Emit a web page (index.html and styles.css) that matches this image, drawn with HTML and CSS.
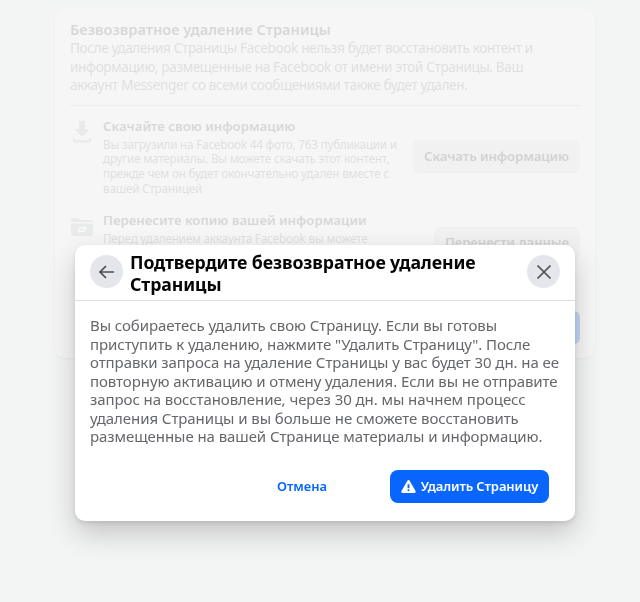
FILE: index.html
```html
<!DOCTYPE html>
<html lang="ru">
<head>
<meta charset="utf-8">
<title>Удаление Страницы</title>
<link rel="stylesheet" href="styles.css">
</head>
<body>
<main class="page">
  <section class="card">
    <h1 class="card-title">Безвозвратное удаление Страницы</h1>
    <p class="card-lead">После удаления Страницы Facebook нельзя будет восстановить контент и информацию, размещенные на Facebook от имени этой Страницы. Ваш аккаунт Messenger со всеми сообщениями также будет удален.</p>
    <hr class="rule">
    <div class="option">
      <svg class="option-icon" viewBox="0 0 20 24" aria-hidden="true"><path d="M7 1h6v8h4.500L10 17 2.500 9H7z"/><path d="M1 18h2v2h14v-2h2v2.500a2 2 0 0 1-2 2H3a2 2 0 0 1-2-2z"/></svg>
      <div class="option-text">
        <h2 class="option-title">Скачайте свою информацию</h2>
        <p class="option-desc">Вы загрузили на Facebook 44 фото, 763 публикации и другие материалы. Вы можете скачать этот контент, прежде чем он будет окончательно удален вместе с вашей Страницей</p>
      </div>
      <button class="ghost-btn">Скачать информацию</button>
    </div>
    <div class="option option-second">
      <svg class="option-icon folder" viewBox="0 0 22 20" aria-hidden="true"><path d="M0 3a2 2 0 0 1 2-2h5l2 2h11a2 2 0 0 1 2 2H0z"/><path fill-rule="evenodd" d="M0 6.500h22V17a2 2 0 0 1-2 2H2a2 2 0 0 1-2-2zM13 8.500v1.500H8v2h5v1.500l3.500-2.500zM9 11.500 5.500 14 9 16.500V15h5v-2H9z"/></svg>
      <div class="option-text">
        <h2 class="option-title">Перенесите копию вашей информации</h2>
        <p class="option-desc">Перед удалением аккаунта Facebook вы можете перенести копию своей информации в другой сервис</p>
      </div>
      <button class="ghost-btn ghost-btn-short">Перенести данные</button>
    </div>
    <div class="card-foot"><span class="foot-btn"></span></div>
  </section>
</main>
<div class="overlay">
  <div class="modal" role="dialog">
    <header class="modal-head">
      <button class="round-btn" aria-label="Назад">
        <svg viewBox="0 0 20 20" class="round-icon" aria-hidden="true"><path d="M17 10H3.500M9 4 3 10l6 6"/></svg>
      </button>
      <h2 class="modal-title">Подтвердите безвозвратное удаление Страницы</h2>
      <button class="round-btn" aria-label="Закрыть">
        <svg viewBox="0 0 20 20" class="round-icon" aria-hidden="true"><path d="M3.500 3.500l13 13M16.500 3.500l-13 13"/></svg>
      </button>
    </header>
    <p class="modal-text">Вы собираетесь удалить свою Страницу. Если вы готовы приступить к удалению, нажмите "Удалить Страницу". После отправки запроса на удаление Страницы у вас будет 30 дн. на ее повторную активацию и отмену удаления. Если вы не отправите запрос на восстановление, через 30 дн. мы начнем процесс удаления Страницы и вы больше не сможете восстановить размещенные на вашей Странице материалы и информацию.</p>
    <footer class="modal-foot">
      <button class="link-btn">Отмена</button>
      <button class="primary-btn">
        <svg viewBox="0 0 16 16" class="warn-icon" aria-hidden="true"><path fill-rule="evenodd" d="M8 1c.5 0 .9.300 1.200.800l6.300 11c.5.900 0 2-1.100 2H1.600c-1.100 0-1.600-1.100-1.100-2l6.300-11C7.100 1.300 7.500 1 8 1zM7 5.500v4.300h2V5.500zM8 10.800a1.100 1.100 0 1 0 0 2.200 1.100 1.100 0 0 0 0-2.200z"/></svg>
        Удалить Страницу
      </button>
    </footer>
  </div>
</div>
</body>
</html>
```
FILE: styles.css
```css
* { box-sizing: border-box; }
html, body { margin: 0; height: 100%; }
body {
  background: #f0f2f5;
  font-family: "Noto Sans", "Open Sans", "Liberation Sans", sans-serif;
  color: #050505;
  overflow: hidden;
}
h1, h2, p { margin: 0; }
button { font-family: inherit; border: 0; cursor: pointer; }

.page { padding: 8px 45px 0 55px; }
.card {
  width: 540px;
  height: 350px;
  padding: 11px 15px 0;
  background: #fff;
  border-radius: 10px;
  box-shadow: 0 1px 2px rgba(0, 0, 0, .2);
  overflow: hidden;
}
.card-title { font-size: 14.600px; line-height: 20px; font-weight: 600; color: #65676b; }
.card-lead { font-size: 13.500px; line-height: 18.500px; color: #8a8d91; width: 490px; letter-spacing: -.33px; }
.rule { border: 0; border-top: 1px solid #ced0d4; margin: 10px 0 0; }
.option { display: flex; align-items: flex-start; margin-top: 11px; }
.option-second { margin-top: 16px; }
.option-icon { width: 20px; height: 24px; flex: none; margin: 3px 11px 0 2px; fill: #bcc0c4; }
.option-icon.folder { width: 22px; height: 20px; margin: 6px 10px 0 1px; }
.option-text { width: 302px; flex: none; }
.option-title { font-size: 13.200px; line-height: 18px; font-weight: 600; color: #65676b; }
.option-desc { font-size: 11.700px; line-height: 14.700px; color: #8a8d91; margin-top: 2px; letter-spacing: -.2px; }
.ghost-btn {
  margin: 23px 0 0 auto;
  width: 167px;
  height: 33px;
  flex: none;
  background: #e4e6eb;
  border-radius: 6px;
  font-size: 13.200px;
  font-weight: 600;
  color: #4b4c4f;
  letter-spacing: -.1px;
  padding: 0;
}
.ghost-btn-short { width: 146px; margin-top: 16px; padding-bottom: 3px; }
.card-foot { display: flex; justify-content: flex-end; margin-top: 50px; }
.foot-btn { width: 60px; height: 33px; background: #0866ff; border-radius: 6px; }

.overlay { position: fixed; inset: 0; background: rgba(244, 244, 244, .8); }
.modal {
  position: absolute;
  left: 75px;
  top: 245px;
  width: 500px;
  height: 276px;
  background: #fff;
  border-radius: 10px;
  box-shadow: 0 12px 28px rgba(0, 0, 0, .2), 0 2px 4px rgba(0, 0, 0, .1);
}
.modal-head {
  display: flex;
  align-items: flex-start;
  gap: 7px;
  height: 56px;
  padding: 10px 15px 0;
  border-bottom: 1px solid #dadde1;
}
.round-btn {
  width: 33px;
  height: 33px;
  flex: none;
  border-radius: 50%;
  background: #e4e6eb;
  padding: 0;
  display: flex;
  align-items: center;
  justify-content: center;
}
.round-icon { width: 20px; height: 20px; fill: none; stroke: #4b4f56; stroke-width: 1.700; }
.modal-title { flex: 1; font-size: 17.700px; line-height: 22px; font-weight: 700; color: #050505; margin-top: -4px; letter-spacing: -.1px; }
.modal-text {
  font-size: 15px;
  line-height: 18.500px;
  color: #65676b;
  padding: 15px 15px 0;
  letter-spacing: -.07px;
}
.modal-foot {
  display: flex;
  justify-content: flex-end;
  align-items: center;
  gap: 36px;
  padding: 24px 26px 0 0;
}
.link-btn { background: none; width: 104px; height: 33px; padding: 0; font-size: 13px; font-weight: 600; color: #0866ff; }
.primary-btn {
  display: flex;
  align-items: center;
  justify-content: center;
  gap: 5px;
  width: 159px;
  height: 33px;
  padding: 0;
  background: #0866ff;
  border-radius: 8px;
  font-size: 13px;
  font-weight: 600;
  color: #fff;
  letter-spacing: -.1px;
}
.warn-icon { width: 15px; height: 15px; fill: #fff; }
```
